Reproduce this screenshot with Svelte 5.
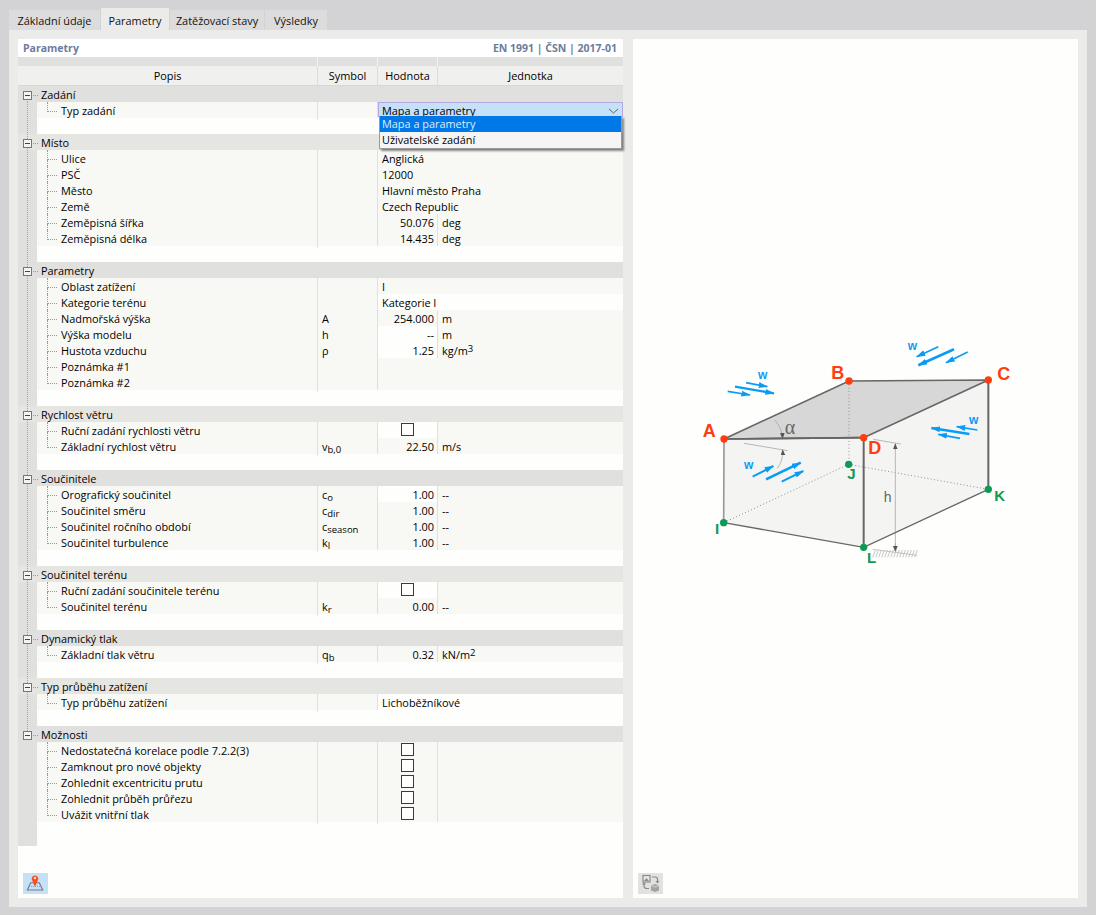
<script>
  const tabs = ['Základní údaje', 'Parametry', 'Zatěžovací stavy', 'Výsledky'];
  const sections = [
    { t: 'Zadání', rows: [{ n: 'Typ zadání', k: 'combo' }] },
    { t: 'Místo', light: true, rows: [
      { n: 'Ulice', k: 'wide', v: 'Anglická' },
      { n: 'PSČ', k: 'wide', v: '12000' },
      { n: 'Město', k: 'wide', v: 'Hlavní město Praha' },
      { n: 'Země', k: 'wide', v: 'Czech Republic' },
      { n: 'Zeměpisná šířka', k: 'num', v: '50.076', u: 'deg' },
      { n: 'Zeměpisná délka', k: 'num', v: '14.435', u: 'deg' }
    ] },
    { t: 'Parametry', rows: [
      { n: 'Oblast zatížení', k: 'wide', v: 'I' },
      { n: 'Kategorie terénu', k: 'wide', v: 'Kategorie I', w: true },
      { n: 'Nadmořská výška', k: 'num', s: 'A', v: '254.000', u: 'm' },
      { n: 'Výška modelu', k: 'num', s: 'h', v: '--', u: 'm', w: true },
      { n: 'Hustota vzduchu', k: 'num', s: 'ρ', v: '1.25', u: 'kg/m', sup: '3', w: true },
      { n: 'Poznámka #1', k: 'wide', v: '' },
      { n: 'Poznámka #2', k: 'wide', v: '' }
    ] },
    { t: 'Rychlost větru', light: true, rows: [
      { n: 'Ruční zadání rychlosti větru', k: 'chk', w: true },
      { n: 'Základní rychlost větru', k: 'num', s: 'v', sub: 'b,0', v: '22.50', u: 'm/s' }
    ] },
    { t: 'Součinitele', rows: [
      { n: 'Orografický součinitel', k: 'num', s: 'c', sub: 'o', v: '1.00', u: '--', w: true },
      { n: 'Součinitel směru', k: 'num', s: 'c', sub: 'dir', v: '1.00', u: '--' },
      { n: 'Součinitel ročního období', k: 'num', s: 'c', sub: 'season', v: '1.00', u: '--' },
      { n: 'Součinitel turbulence', k: 'num', s: 'k', sub: 'l', v: '1.00', u: '--' }
    ] },
    { t: 'Součinitel terénu', light: true, rows: [
      { n: 'Ruční zadání součinitele terénu', k: 'chk', w: true },
      { n: 'Součinitel terénu', k: 'num', s: 'k', sub: 'r', v: '0.00', u: '--' }
    ] },
    { t: 'Dynamický tlak', rows: [
      { n: 'Základní tlak větru', k: 'num', s: 'q', sub: 'b', v: '0.32', u: 'kN/m', sup: '2' }
    ] },
    { t: 'Typ průběhu zatížení', light: true, rows: [
      { n: 'Typ průběhu zatížení', k: 'wide', v: 'Lichoběžníkové', w: true }
    ] },
    { t: 'Možnosti', last: true, rows: [
      { n: 'Nedostatečná korelace podle 7.2.2(3)', k: 'chk' },
      { n: 'Zamknout pro nové objekty', k: 'chk' },
      { n: 'Zohlednit excentricitu prutu', k: 'chk' },
      { n: 'Zohlednit průběh průřezu', k: 'chk' },
      { n: 'Uvážit vnitřní tlak', k: 'chk' }
    ] }
  ];
  const arrows = [
    [168,158,232,170,5],[135,170,252,190,7],[113,184,180,195,5],
    [745,50,680,80,5],[792,58,685,106,8],[833,66,768,98,5],
    [862,300,800,290,5],[838,312,724,294,7],[810,325,745,313,5],
    [188,440,250,408,6],[228,448,332,398,8],[275,455,340,423,6]
  ];
  const wLabels = [[218,148],[667,60],[851,281],[176,418]];
  const red = [['A',102,327,38,322],['B',477,153,424,146],['C',895,150,922,149],['D',521,323,535,372]];
  const green = [['I',101,578,75,612],['J',476,403,472,446],['K',895,478,913,514],['L',521,652,531,700]];
  const hatch = Array.from({ length: 15 }, (_, i) => 556 + i * 9);
</script>

<div class="window">
  <div class="tabs">
    {#each tabs as tab, i}
      <div class="tab" class:active={i === 1}>{tab}</div>
    {/each}
  </div>
  <div class="panel">
    <div class="left">
      <div class="title"><span>Parametry</span><span>EN 1991 | ČSN | 2017-01</span></div>
      <div class="band"><i></i><i></i><i></i><i></i></div>
      <div class="head"><div>Popis</div><div>Symbol</div><div>Hodnota</div><div>Jednotka</div></div>
      {#each sections as sec, si}
        <div class="group" class:light={sec.light}>
          <div class="gut" class:first={si === 0} class:end={sec.last}><span class="box"></span></div>
          <div class="gname">{sec.t}</div>
        </div>
        {#each sec.rows as r, ri}
          <div class="row">
            <div class="gut" class:none={sec.last}></div>
            <div class="name" class:through={ri < sec.rows.length - 1}>{r.n}</div>
            <div class="sym">{#if r.s}{r.s}{/if}{#if r.sub}<sub>{r.sub}</sub>{/if}</div>
            {#if r.k === 'combo'}
              <div class="combo">
                <span>Mapa a parametry</span>
                <svg class="chev" width="11" height="6" viewBox="0 0 11 6"><path d="M1 1l4.500 4L10 1" fill="none" stroke="#666" stroke-width="1"/></svg>
                <div class="list">
                  <div class="sel">Mapa a parametry</div>
                  <div>Uživatelské zadání</div>
                </div>
              </div>
            {:else if r.k === 'wide'}
              <div class="wide" class:white={r.w}>{r.v}</div>
            {:else if r.k === 'chk'}
              <div class="val chkc" class:white={r.w}><span class="chk"></span></div>
              <div class="unit"></div>
            {:else}
              <div class="val" class:white={r.w}>{r.v}</div>
              <div class="unit">{r.u}{#if r.sup}<sup>{r.sup}</sup>{/if}</div>
            {/if}
          </div>
        {/each}
        {#if !sec.last}
          <div class="blank"><div class="gut"></div></div>
        {/if}
      {/each}
      <div class="tail"></div>
      <div class="foot">
        <div class="btn blue">
          <svg width="25" height="21" viewBox="0 0 25 21">
            <path d="M7.700 9.700h8.600l3.400 7.300H4.300z" fill="none" stroke="#737b84" stroke-width="1.100"/>
            <path d="M6 13.500h12" stroke="#9aa3ab" stroke-width="1" stroke-dasharray="1 1"/>
            <path d="M12 14L9.300 7.500a3.200 3.200 0 1 1 5.400 0z" fill="#ff4a1c"/>
            <circle cx="12" cy="5" r="1.300" fill="#ffd9cc"/>
          </svg>
        </div>
      </div>
    </div>
    <div class="right">
      <svg class="diagram" width="340" height="250" viewBox="0 0 1020 750">
        <defs>
          <marker id="blue" markerUnits="userSpaceOnUse" markerWidth="30" markerHeight="24" refX="26" refY="12" orient="auto">
            <path d="M0 3L28 12L0 21z" fill="#0a9cf5"/>
          </marker>
          <marker id="gr" markerUnits="userSpaceOnUse" markerWidth="20" markerHeight="20" refX="16" refY="10" orient="auto">
            <path d="M0 3L18 10L0 17z" fill="#555"/>
          </marker>
        </defs>
        <polygon points="102,327 477,153 895,150 521,323" fill="#d7d7d7"/>
        <polygon points="102,327 521,323 521,652 101,578" fill="#f4f5f3"/>
        <polygon points="521,323 895,150 895,478 521,652" fill="#f4f5f3"/>
        <g stroke="#8f8f8f" stroke-width="3" stroke-dasharray="3 7" fill="none">
          <path d="M477 153V403"/>
          <path d="M476 403L101 578"/>
          <path d="M476 403L895 478"/>
        </g>
        <g stroke="#aaa" stroke-width="2.500" fill="none">
          <path d="M162 340L293 362"/>
          <path d="M550 328L632 342"/>
          <path d="M616 342V665"/>
          <path d="M255 270Q276 296 278 325" marker-end="url(#gr)"/>
          <path d="M262 415Q280 392 278 360" marker-end="url(#gr)"/>
          <path d="M616 360V342" marker-end="url(#gr)"/>
          <path d="M616 640V664" marker-end="url(#gr)"/>
        </g>
        <g stroke="#bbb" stroke-width="2.500">
          <path d="M548 658L682 676"/>
          {#each hatch as x}
            <path d="M{x} 660l-8 22"/>
          {/each}
        </g>
        <g stroke="#666" stroke-linecap="round">
          <path d="M102 327L477 153L895 150L521 323Z" fill="none" stroke-width="5"/>
          <path d="M102 327L521 323" stroke-width="5"/>
          <path d="M521 323V652" stroke-width="6"/>
          <path d="M895 150V478" stroke-width="6"/>
          <path d="M102 327L101 578" stroke="#999" stroke-width="5"/>
          <path d="M101 578L521 652L895 478" fill="none" stroke-width="4"/>
        </g>
        {#each arrows as a}
          <line x1={a[0]} y1={a[1]} x2={a[2]} y2={a[3]} stroke="#0a9cf5" stroke-width={a[4]} marker-end="url(#blue)"/>
        {/each}
        {#each wLabels as w}
          <text x={w[0]} y={w[1]} class="w" text-anchor="middle">w</text>
        {/each}
        <text x="284" y="313" class="alpha">α</text>
        <text x="593" y="516" class="h" text-anchor="middle">h</text>
        {#each red as p}
          <circle cx={p[1]} cy={p[2]} r="11" fill="#ff3d10"/>
          <text x={p[3]} y={p[4]} class="lab redt">{p[0]}</text>
        {/each}
        {#each green as p}
          <circle cx={p[1]} cy={p[2]} r="11" fill="#0c9a55"/>
          <text x={p[3]} y={p[4]} class="lab greent">{p[0]}</text>
        {/each}
      </svg>
      <div class="foot">
        <div class="btn grey">
          <svg width="25" height="21" viewBox="0 0 25 21">
            <rect x="5" y="2.500" width="7" height="6.500" fill="#e8e8e6" stroke="#8a8a8a" stroke-width="1.200"/>
            <path d="M6 8l2.500-3 2.500 3z" fill="#8a8a8a"/>
            <path d="M14 4h3.500q2 0 2 2.500v2" fill="none" stroke="#8a8a8a" stroke-width="1.200"/>
            <path d="M17.500 8h4l-2 2.500z" fill="#8a8a8a"/>
            <path d="M6 11v2q0 2.500 3 2.500h2" fill="none" stroke="#8a8a8a" stroke-width="1.200"/>
            <path d="M4 11.500h4l-2-2.500z" fill="#8a8a8a"/>
            <path d="M13 12.500l4-1.500 4 1.500v5l-4 1.500-4-1.500z" fill="#a2a2a2"/>
            <path d="M13 12.500l4 1.500 4-1.500" fill="none" stroke="#e2e2e0" stroke-width=".8"/>
          </svg>
        </div>
      </div>
    </div>
  </div>
</div>

<style>
  :global(body) { margin: 0; background: #d3d3d5; }
  .window {
    box-sizing: border-box;
    width: 1096px;
    height: 915px;
    padding: 8px 9px;
    display: flex;
    flex-direction: column;
    font: 10.900px/18px "Open Sans", sans-serif;
    color: #000;
    overflow: hidden;
  }
  .tabs {
    display: grid;
    grid-template-columns: 91px 68px 94px 62px;
    gap: 1px;
    height: 22px;
    align-items: end;
  }
  .tab {
    height: 20px;
    line-height: 22px;
    text-align: center;
    background: #dcdcdc;
    color: #111;
  }
  .tab.active {
    height: 22px;
    line-height: 26px;
    background: #ebebe9;
  }
  .panel {
    flex: 1;
    min-height: 0;
    background: #ebebe9;
    padding: 9px;
    display: flex;
    gap: 10px;
  }
  .left, .right {
    background: #fefefc;
    display: flex;
    flex-direction: column;
  }
  .left { width: 605px; }
  .right { width: 445px; }
  .diagram { display: block; margin: 291px 0 0 57px; }
  .title {
    height: 18px;
    line-height: 18px;
    padding: 0 6px 0 5px;
    display: flex;
    justify-content: space-between;
    font-weight: 700;
    font-size: 10.500px;
    color: #6d7c9c;
    background: #fff;
  }
  .band {
    height: 9px;
    display: grid;
    grid-template-columns: 300px 60px 60px 185px;
    background: #e0e0de;
  }
  .band i { border-right: 1px solid #f4f4f2; }
  .band i:last-child { border: 0; }
  .head {
    height: 20px;
    box-sizing: border-box;
    display: grid;
    grid-template-columns: 300px 60px 60px 185px;
    background: #f0f0ee;
    border-bottom: 1px solid #d8d8d6;
    line-height: 19px;
    text-align: center;
  }
  .head div { border-right: 1px solid #dcdcda; }
  .head div:last-child { border: 0; }
  .group {
    height: 16px;
    display: flex;
    background: #e0e0de;
    position: relative;
  }
  .group.light { background: #e5e5e2; }
  .gname { padding-left: 4px; }
  .gut {
    position: relative;
    width: 19px;
    flex: none;
    background-color: #e0e0de;
    background-image: repeating-linear-gradient(to bottom, #a6a6a6 0 1px, transparent 1px 2px);
    background-size: 1px 100%;
    background-position: 9px 0;
    background-repeat: no-repeat;
  }
  .group.light .gut { background-color: #e5e5e2; }
  .gut.none { background-image: none; }
  .gut.first { background-position: 9px 13px; }
  .gut.end { background-size: 1px 5px; }
  .box {
    position: absolute;
    left: 5px;
    top: 5px;
    width: 7px;
    height: 7px;
    border: 1px solid #777;
    background: linear-gradient(#444, #444) center / 5px 1px no-repeat #f4f4f2;
  }
  .box::after {
    content: "";
    position: absolute;
    left: 9px;
    top: 3px;
    width: 5px;
    height: 1px;
    background: repeating-linear-gradient(to right, #999 0 1px, transparent 1px 2px);
  }
  .row {
    height: 16px;
    display: grid;
    grid-template-columns: 19px 281px 60px 60px 185px;
    background: #f8f9f4;
  }
  .name {
    position: relative;
    padding-left: 24px;
    border-right: 1px solid #e0e0dd;
    white-space: nowrap;
  }
  .name::before {
    content: "";
    position: absolute;
    left: 10px;
    top: 0;
    width: 9px;
    height: 9px;
    border-left: 1px dotted #999;
    border-bottom: 1px dotted #999;
  }
  .through::after {
    content: "";
    position: absolute;
    left: 10px;
    top: 10px;
    bottom: 0;
    border-left: 1px dotted #999;
  }
  .sym {
    padding-left: 4px;
    border-right: 1px solid #e0e0dd;
    white-space: nowrap;
  }
  sub {
    font-size: 9.500px;
    line-height: 0;
    vertical-align: -2px;
  }
  sup {
    font-size: 9.500px;
    line-height: 0;
    vertical-align: 3px;
  }
  .wide {
    grid-column: span 2;
    padding-left: 4px;
  }
  .white { background: #fefefc; }
  .val {
    text-align: right;
    padding-right: 3px;
    border-right: 1px solid #e0e0dd;
    height: 16px;
  }
  .chkc {
    display: flex;
    justify-content: center;
    padding: 1px 0 0;
    box-sizing: border-box;
  }
  .chk {
    box-sizing: border-box;
    width: 13px;
    height: 13px;
    border: 1px solid #3a3a3a;
    background: #fefefc;
  }
  .unit { padding-left: 4px; }
  .combo {
    grid-column: span 2;
    position: relative;
    box-sizing: border-box;
    height: 15px;
    padding-left: 3px;
    line-height: 15px;
    background: #c5e1f8;
    border: 1px solid #b5a8e2;
    border-bottom: 0;
  }
  .chev { position: absolute; right: 3px; top: 5px; }
  .list {
    position: absolute;
    left: 0;
    right: 0;
    top: 13px;
    z-index: 2;
    background: #f5f5f5;
    border: 1px solid #9a9a9a;
    border-top: 0;
    box-shadow: 2px 2px 2px rgba(0,0,0,.45);
    line-height: 16px;
  }
  .list div { padding-left: 2px; height: 16px; }
  .list .sel { background: #0078e8; color: #dfeefc; }
  .blank {
    height: 16px;
    display: flex;
    background: #fefefc;
  }
  .tail {
    width: 19px;
    height: 24px;
    background: #e0e0de;
  }
  .foot {
    margin-top: auto;
    padding: 0 0 4px 5px;
  }
  .btn { width: 25px; height: 21px; }
  .btn svg { display: block; }
  .blue { background: #c5e1f8; }
  .grey { background: #e2e2e0; }
  .lab { font: 700 54px "Liberation Sans", sans-serif; }
  .redt { fill: #ff3d10; }
  .greent { fill: #0c9a55; font-size: 45px; }
  .w { font: 700 36px "Liberation Sans", sans-serif; fill: #0a9cf5; }
  .alpha { font: 60px "Liberation Serif", serif; fill: #666; }
  .h { font: 42px "Liberation Sans", sans-serif; fill: #666; }
</style>
